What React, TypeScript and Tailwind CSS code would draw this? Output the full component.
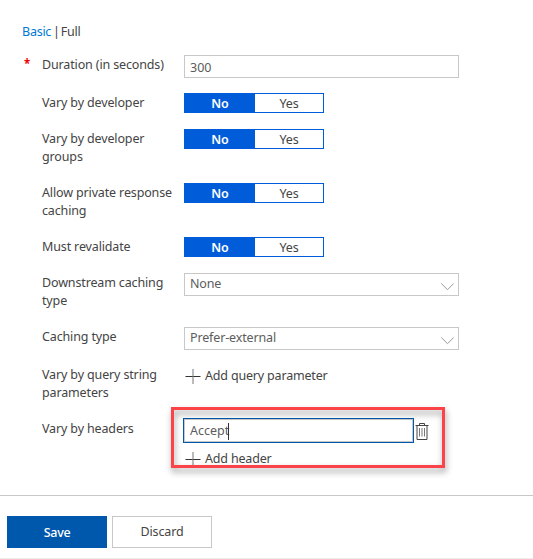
import type { ReactNode } from "react";

function Row({ label, className, required, children }: { label: string; className: string; required?: boolean; children: ReactNode }) {
  return (
    <div className={`flex items-start ${className}`}>
      <span className="w-5 shrink-0 pl-0.5 text-[11.5px] font-bold text-[#f00000]">{required ? "*" : ""}</span>
      <label className="w-[142px] shrink-0 pt-px pr-2">{label}</label>
      {children}
    </div>
  );
}

function Toggle() {
  return (
    <div className="flex h-5 w-[140px] border border-[#015cda] bg-white text-center leading-[19px]">
      <button className="w-[70px] bg-[#015cda] font-semibold text-white">No</button>
      <button className="flex-1">Yes</button>
    </div>
  );
}

function Select({ value }: { value: string }) {
  return (
    <div className="flex h-[23px] w-[275px] justify-between border border-[#c8c8c8] pr-1 pl-[5px] text-[#5c5c5c] leading-[19px]">
      <span>{value}</span>
      <svg width="13" height="8" viewBox="0 0 13 8" className="mt-[9px]" fill="none" stroke="#999">
        <path d="M.3.5 6.5 6.7 12.7.5" />
      </svg>
    </div>
  );
}

function AddButton({ label }: { label: string }) {
  return (
    <button className="flex h-[22px] items-center gap-1 pl-[1px] leading-[22px] tracking-[-0.18px]">
      <svg width="16" height="15" viewBox="0 0 16 15" fill="none">
        <path d="M.5 7.5h15" stroke="#333" />
        <path d="M8 0v15" stroke="#777" />
      </svg>
      <span>{label}</span>
    </button>
  );
}

function TrashIcon() {
  return (
    <svg width="14" height="17" viewBox="0 0 14 17" className="mt-px" fill="none" stroke="#444">
      <path d="M.5 2.5h13M4.5 2.5v-2h5v2M2 3v13.5h10V3" />
      <path d="M4.5 5v8.5M7 5v8.5M9.5 5v8.5" stroke="#777" />
    </svg>
  );
}

export default function App() {
  return (
    <div className="relative h-[559px] w-[533px] overflow-hidden bg-white font-['Noto_Sans','Open_Sans',sans-serif] text-[12.5px] leading-[18px] tracking-[-0.14px] text-[#444]">
      <main className="h-[495px] pt-[23px] pl-[22px]">
        <nav className="h-8 tracking-[-0.25px]">
          <a className="text-[#0078d4]">Basic</a><span className="mr-px ml-[2px]">|</span><span>Full</span>
        </nav>
        <Row label="Duration (in seconds)" className="h-[38px]" required>
          <div className="h-[23px] w-[275px] border border-[#c8c8c8] pl-[5px] tracking-normal text-[#5c5c5c] leading-[23px]">300</div>
        </Row>
        <Row label="Vary by developer" className="h-9"><Toggle /></Row>
        <Row label="Vary by developer groups" className="h-[54px]"><Toggle /></Row>
        <Row label="Allow private response caching" className="h-[54px]"><Toggle /></Row>
        <Row label="Must revalidate" className="h-9"><Toggle /></Row>
        <Row label="Downstream caching type" className="h-[54px]"><Select value="None" /></Row>
        <Row label="Caching type" className="h-[38px]"><Select value="Prefer-external" /></Row>
        <Row label="Vary by query string parameters" className="h-[54px]"><AddButton label="Add query parameter" /></Row>
        <Row label="Vary by headers" className="h-12">
          <div className="-mt-px -ml-px">
            <div className="flex items-center gap-[1px]">
              <div className="h-[25px] w-[231px] border border-[#0058ad]">
                <div className="flex h-[23px] items-center border border-[#c8c8c8] pt-px pl-[5px] tracking-normal text-[#5c5c5c]">
                  <span>Accept</span><span className="-ml-px h-[17px] w-px bg-[#333]" />
                </div>
              </div>
              <TrashIcon />
            </div>
            <div className="mt-[5px] ml-px"><AddButton label="Add header" /></div>
          </div>
        </Row>
      </main>
      <footer className="flex h-16 gap-[5px] border-t border-b border-t-[#c8c8c8] border-b-[#eee] pt-5 pl-[7px]">
        <button className="h-8 w-[100px] bg-[#0058ad] pt-px font-medium tracking-[-0.3px] text-white">Save</button>
        <button className="h-8 w-[100px] border border-[#c8c8c8]">Discard</button>
      </footer>
      <div className="pointer-events-none absolute top-[407px] left-[171px] h-[61px] w-[274px] border-3 border-[#fb4348] [filter:drop-shadow(1px_4px_3px_rgba(0,0,0,0.4))]" />
    </div>
  );
}
